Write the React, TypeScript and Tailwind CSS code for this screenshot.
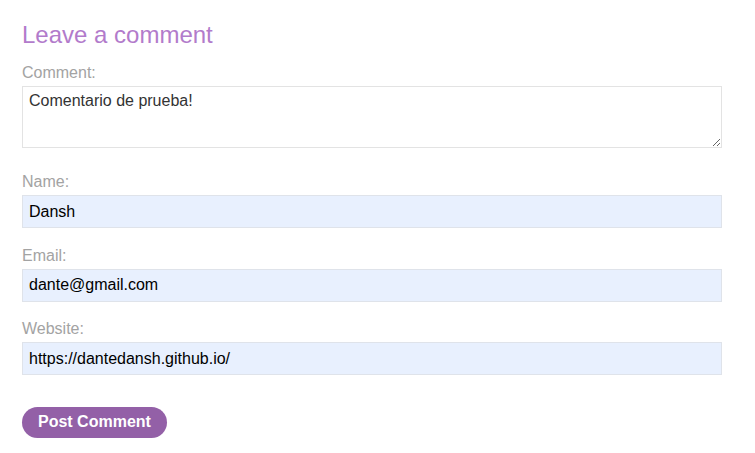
export default function App() {
  const fields = [
    { label: "Name:", value: "Dansh", type: "text" },
    { label: "Email:", value: "dante@gmail.com", type: "email" },
    { label: "Website:", value: "https://dantedansh.github.io/", type: "url" },
  ];

  return (
    <div className="min-h-screen bg-white px-[22px] pt-[19px] font-['Liberation_Sans',Arial,sans-serif]">
      <h3 className="mb-[12px] text-[24px] leading-[32px] text-[#b27bcb]">Leave a comment</h3>
      <form className="w-[700px]" onSubmit={(e) => e.preventDefault()}>
        <div className="mb-[24px]">
          <label className="mb-[3px] block text-base leading-[20px] text-[#a3a3a3]">Comment:</label>
          <textarea
            defaultValue="Comentario de prueba!"
            className="block h-[62px] w-full border border-[#e3e3e3] px-[6px] py-[5px] text-base leading-[18px] text-[#333]"
          />
        </div>
        {fields.map((f) => (
          <div key={f.label} className="mb-[17.5px]">
            <label className="mb-[3px] block text-base leading-[20px] text-[#a3a3a3]">{f.label}</label>
            <input
              type={f.type}
              defaultValue={f.value}
              className="block h-[33px] w-full border border-[#dfe3ea] bg-[#e8f0fe] px-[6px] text-base text-black"
            />
          </div>
        ))}
        <button
          type="submit"
          className="mt-[14px] h-[31px] rounded-full bg-[#9360a7] px-4 text-base font-bold leading-[18px] text-white"
        >
          Post Comment
        </button>
      </form>
    </div>
  );
}
